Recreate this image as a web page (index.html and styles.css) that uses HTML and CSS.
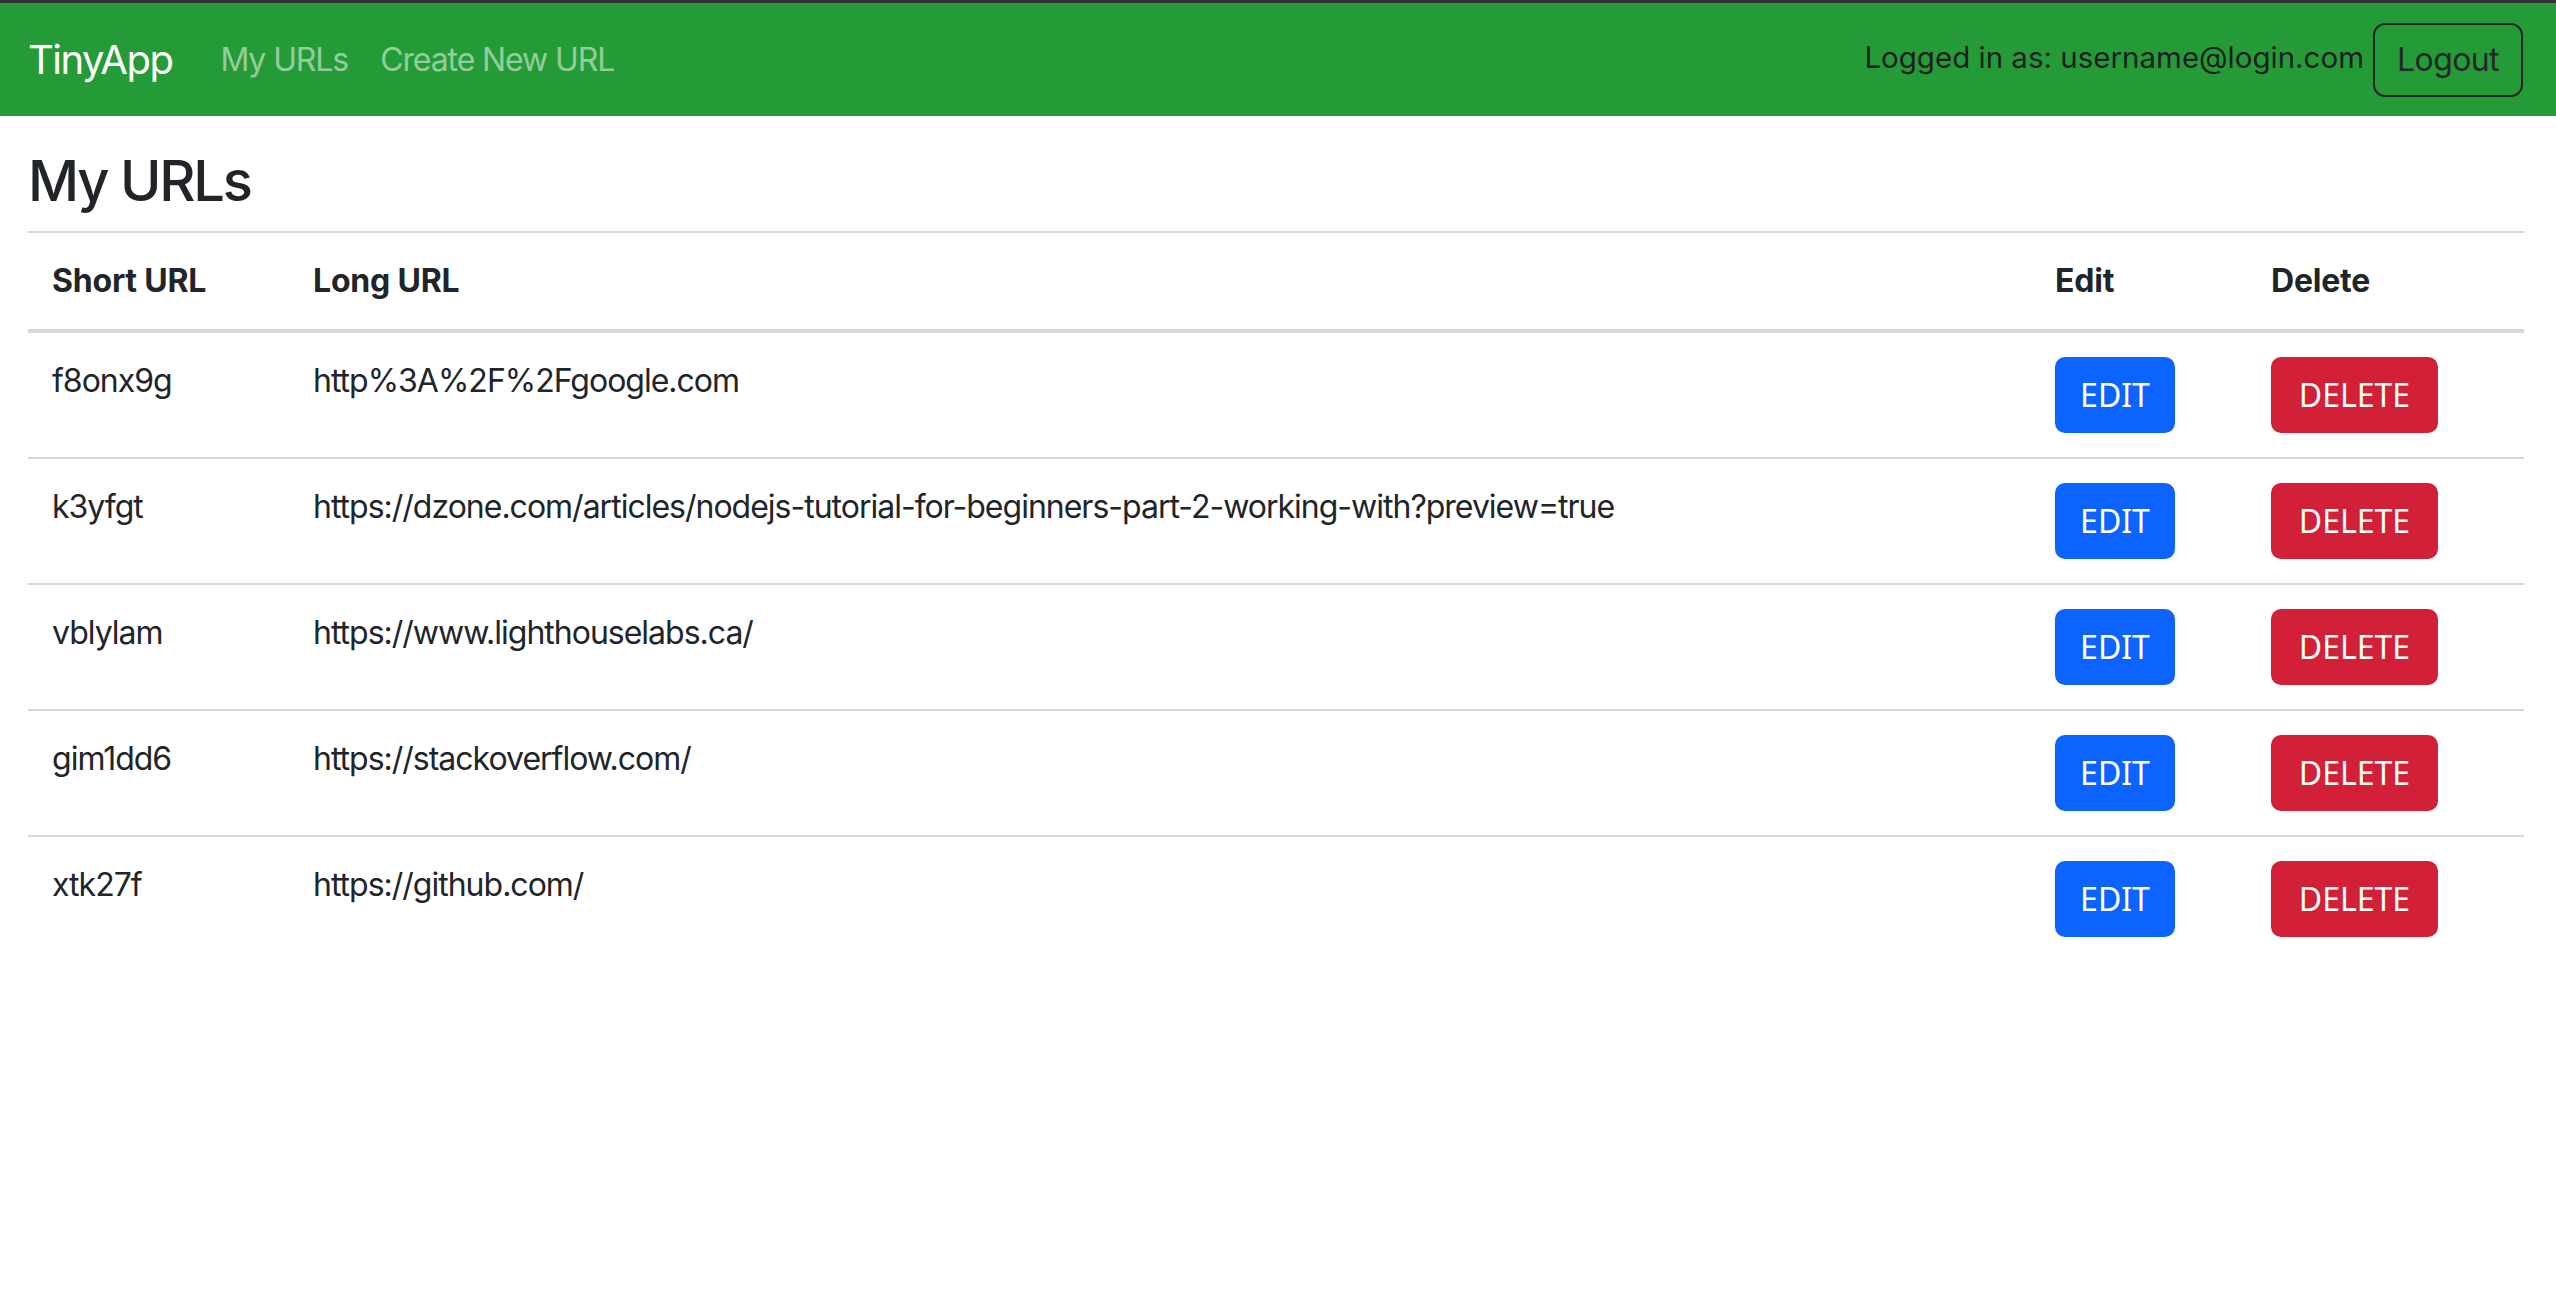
FILE: index.html
```html
<!DOCTYPE html>
<html lang="en">
<head>
<meta charset="utf-8">
<title>TinyApp</title>
<link rel="stylesheet" href="styles.css">
</head>
<body>
<nav class="navbar">
  <a class="brand" href="#">TinyApp</a>
  <div class="nav-links">
    <a class="nav-link" href="#">My URLs</a>
    <a class="nav-link" href="#">Create New URL</a>
  </div>
  <div class="nav-right">
    <span class="nav-text">Logged in as: username@login.com</span>
    <button class="btn-logout" type="button">Logout</button>
  </div>
</nav>
<main class="content">
  <h1 class="title">My URLs</h1>
  <table class="url-table">
    <colgroup>
      <col class="c-short">
      <col class="c-long">
      <col class="c-edit">
      <col class="c-del">
    </colgroup>
    <thead>
      <tr><th>Short URL</th><th>Long URL</th><th>Edit</th><th>Delete</th></tr>
    </thead>
    <tbody>
      <tr>
        <td>f8onx9g</td>
        <td>http%3A%2F%2Fgoogle.com</td>
        <td><button class="btn btn-edit" type="button">EDIT</button></td>
        <td><button class="btn btn-delete" type="button">DELETE</button></td>
      </tr>
      <tr>
        <td>k3yfgt</td>
        <td>https://dzone.com/articles/nodejs-tutorial-for-beginners-part-2-working-with?preview=true</td>
        <td><button class="btn btn-edit" type="button">EDIT</button></td>
        <td><button class="btn btn-delete" type="button">DELETE</button></td>
      </tr>
      <tr>
        <td>vblylam</td>
        <td>https://www.lighthouselabs.ca/</td>
        <td><button class="btn btn-edit" type="button">EDIT</button></td>
        <td><button class="btn btn-delete" type="button">DELETE</button></td>
      </tr>
      <tr>
        <td>gim1dd6</td>
        <td>https://stackoverflow.com/</td>
        <td><button class="btn btn-edit" type="button">EDIT</button></td>
        <td><button class="btn btn-delete" type="button">DELETE</button></td>
      </tr>
      <tr>
        <td>xtk27f</td>
        <td>https://github.com/</td>
        <td><button class="btn btn-edit" type="button">EDIT</button></td>
        <td><button class="btn btn-delete" type="button">DELETE</button></td>
      </tr>
    </tbody>
  </table>
</main>
</body>
</html>
```
FILE: styles.css
```css
* { box-sizing: border-box; }

html, body {
  margin: 0;
  padding: 0;
  background: #ffffff;
}

body {
  font-family: Inter, "Liberation Sans", sans-serif;
  font-size: 32px;
  line-height: 1.5;
  color: #212529;
}

.navbar {
  display: flex;
  align-items: center;
  height: 116px;
  border-top: 3px solid #333333;
  background: #259b37;
  padding: 0 33px 0 28px;
}

.brand {
  font-size: 40px;
  letter-spacing: -1.5px;
  line-height: 1.5;
  color: #ffffff;
  text-decoration: none;
  margin-right: 32px;
}

.nav-links {
  display: flex;
  align-items: center;
}

.nav-link {
  font-size: 32px;
  letter-spacing: -1.1px;
  color: rgba(255, 255, 255, 0.5);
  text-decoration: none;
  padding: 0 16px;
}

.nav-right {
  margin-left: auto;
  display: flex;
  align-items: center;
  gap: 9px;
}

.nav-text {
  font-size: 29.5px;
  color: #1c1f22;
  margin-top: -4px;
}

.btn-logout {
  font-family: Inter, "Liberation Sans", sans-serif;
  font-size: 32px;
  letter-spacing: -0.6px;
  line-height: 48px;
  color: #25282b;
  background: transparent;
  border: 2px solid #25282b;
  border-radius: 12px;
  padding: 11px 0;
  width: 150px;
  height: 74px;
  text-align: center;
}

.content {
  padding: 0 32px 0 28px;
}

.title {
  font-size: 56px;
  letter-spacing: -2.2px;
  font-weight: 500;
  line-height: 1.2;
  margin: 32px 0 16px 0;
}

.url-table {
  width: 100%;
  border-collapse: separate;
  border-spacing: 0;
  border-top: 2px solid #d5d9dd;
}

.c-short { width: 261px; }
.c-edit { width: 216px; }
.c-del { width: 277px; }

.url-table th,
.url-table td {
  text-align: left;
  vertical-align: top;
  padding: 24px 24px;
  line-height: 48px;
}

.url-table th {
  font-weight: 700;
  letter-spacing: -0.2px;
  border-bottom: 4px solid #d5d9dd;
}

.url-table tbody td {
  letter-spacing: -1px;
  border-bottom: 2px solid #d5d9dd;
}

.url-table tbody tr:last-child td {
  border-bottom: 0;
}

.btn {
  display: inline-block;
  font-family: "Noto Sans", "Open Sans", sans-serif;
  font-size: 32px;
  letter-spacing: 0;
  line-height: 48px;
  height: 76px;
  padding: 12px 0;
  text-align: center;
  border: 2px solid transparent;
  border-radius: 10px;
  color: #ffffff;
  cursor: pointer;
}

.btn-edit { width: 120px; background: #0c63fd; border-color: #0c63fd; }
.btn-delete { width: 167px; background: #d12037; border-color: #d12037; }
```
